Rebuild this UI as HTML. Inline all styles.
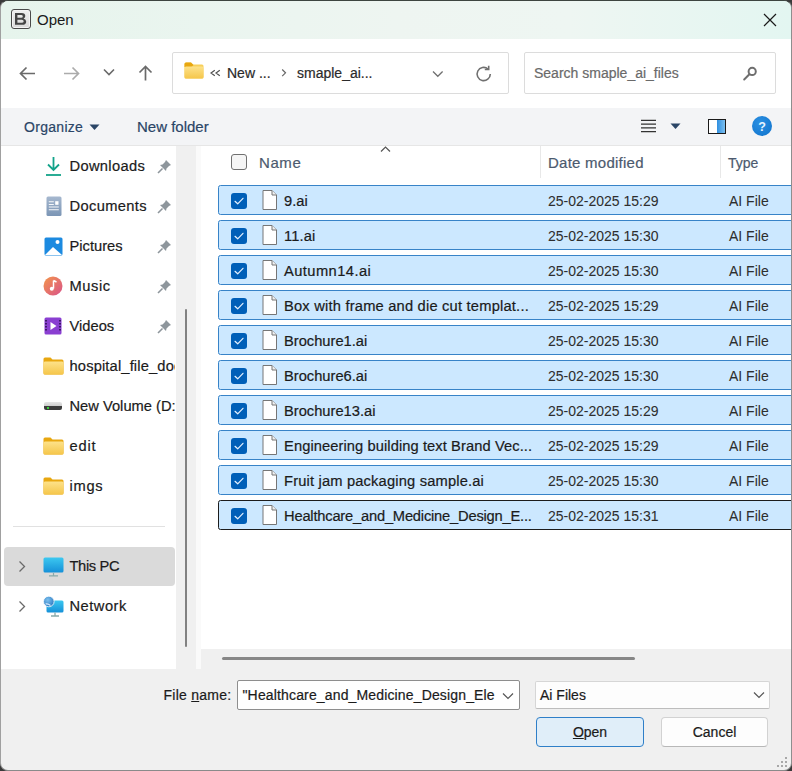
<!DOCTYPE html>
<html><head><meta charset="utf-8">
<style>
*{box-sizing:border-box;margin:0;padding:0}
html,body{width:792px;height:771px;overflow:hidden;background:#3a3a3a}
body{position:relative;font-family:"Liberation Sans",sans-serif;font-size:14px;color:#1b1b1b;-webkit-text-stroke:0.2px currentColor}
.a{position:absolute}
.t{position:absolute;white-space:nowrap;line-height:20px;height:20px}
#win{position:absolute;left:0;top:0;width:792px;height:771px;border-radius:8px;overflow:hidden;background:#f0f0f0;border:1px solid #a0a0a0;border-top-color:#3d4540;border-right-color:#8e8e8e;border-bottom-color:#8a8a8a}
#title{left:0;top:0;width:790px;height:38px;background:linear-gradient(90deg,#e6f4ec 0%,#eaf5ef 25%,#eef5f1 50%,#eef6f2 72%,#e3f6f1 100%)}
#cmd{left:0;top:38px;width:790px;height:69px;background:#fff}
#tool{left:0;top:107px;width:790px;height:38px;background:#f3f4f6;border-bottom:1px solid #e6e6e6}
#nav{left:0;top:145px;width:175px;height:523px;background:#fff}
#vtrack{left:175px;top:145px;width:20px;height:523px;background:#f0f0f0}
#vsep{left:195px;top:145px;width:5px;height:523px;background:#fafafa}
#content{left:200px;top:145px;width:590px;height:503px;background:#fff}
#htrack{left:200px;top:648px;width:590px;height:20px;background:#f0f0f0}
.row{position:absolute;left:218px;width:600px;height:30px;background:#cce8ff;border:1.5px solid #3783c8;border-radius:2.5px}
.cb{position:absolute;left:11.5px;top:6.5px;width:16px;height:16px;background:#005fb8;border-radius:3px}
.nm{position:absolute;left:65px;top:5px;font-size:14.7px;line-height:20px;white-space:nowrap}
.dt{position:absolute;left:329px;top:4.5px;line-height:20px;white-space:nowrap;color:#2e2e2e;-webkit-text-stroke:0.05px currentColor}
.ty{position:absolute;left:510px;top:4.5px;line-height:20px;white-space:nowrap;color:#2e2e2e;-webkit-text-stroke:0.05px currentColor}
.fi{position:absolute;left:42.5px;top:3px}
.ni{position:absolute;left:69.5px;line-height:20px;white-space:nowrap;font-size:14.7px}
.pin{position:absolute;left:157px}
.box{position:absolute;background:#fff;border:1px solid #dcdcdc;border-radius:2px}
</style></head><body>
<div id="win">
<div id="title" class="a"></div>
<div id="cmd" class="a"></div>
<div id="tool" class="a"></div>
<div id="nav" class="a"></div>
<div id="vtrack" class="a"></div>
<div id="vsep" class="a"></div>
<div id="content" class="a"></div>
<div id="htrack" class="a"></div>
</div>
<!-- title bar -->
<div class="a" style="left:11px;top:9px;width:20px;height:20px;border:1.5px solid #4a4a4a;border-radius:3px;background:linear-gradient(#eeeeee,#dadada);box-shadow:inset 0 0 0 1px #f4f4f4"></div>
<svg class="a" style="left:14px;top:12px" width="14" height="14" viewBox="0 0 14 14"><path fill-rule="evenodd" fill="#454545" d="M1 1 H7.6 Q11.3 1 11.3 4 Q11.3 5.8 9.6 6.5 Q12.2 7.2 12.2 9.7 Q12.2 12.8 8.2 12.8 H1 Z M3.4 3.1 H7.2 Q8.8 3.1 8.8 4.4 Q8.8 5.7 7.2 5.7 H3.4 Z M3.4 7.7 H7.7 Q9.7 7.7 9.7 9.2 Q9.7 10.7 7.7 10.7 H3.4 Z"/></svg>
<div class="t" style="left:37px;top:9.5px;font-size:15px;color:#1a1a1a;-webkit-text-stroke:0">Open</div>
<svg class="a" style="left:763px;top:13px" width="14" height="14" viewBox="0 0 14 14"><path d="M1 1 L13 13 M13 1 L1 13" stroke="#1a1a1a" stroke-width="1.2"/></svg>

<!-- nav buttons -->
<svg class="a" style="left:19px;top:65.5px" width="17" height="15" viewBox="0 0 17 15"><path d="M16 7.5 H2 M7.5 1.5 L1.5 7.5 L7.5 13.5" fill="none" stroke="#6a6a6a" stroke-width="1.7"/></svg>
<svg class="a" style="left:63px;top:65.5px" width="17" height="15" viewBox="0 0 17 15"><path d="M1 7.5 H15 M9.5 1.5 L15.5 7.5 L9.5 13.5" fill="none" stroke="#ababab" stroke-width="1.7"/></svg>
<svg class="a" style="left:103px;top:68px" width="12" height="8" viewBox="0 0 12 8"><path d="M1 1.5 L6 6.5 L11 1.5" fill="none" stroke="#6a6a6a" stroke-width="1.6"/></svg>
<svg class="a" style="left:137px;top:65px" width="17" height="16" viewBox="0 0 17 16"><path d="M8.5 15.5 V1.5 M2.5 7.5 L8.5 1.5 L14.5 7.5" fill="none" stroke="#6a6a6a" stroke-width="1.7"/></svg>

<!-- address box -->
<div class="box" style="left:172px;top:52px;width:337px;height:42px"></div>
<svg class="a" style="left:184px;top:62px" width="20" height="17" viewBox="0 0 20 17"><path d="M0.5 2 Q0.5 0.5 2 0.5 H7 L9 2.5 H18 Q19.5 2.5 19.5 4 V15 Q19.5 16.5 18 16.5 H2 Q0.5 16.5 0.5 15 Z" fill="#f7cf5a"/><path d="M0.5 2 Q0.5 0.5 2 0.5 H7 L9.5 3 L7.5 5 H0.5 Z" fill="#e8a710"/><rect x="0.5" y="4.5" width="19" height="12" rx="1.5" fill="url(#fg)"/><defs><linearGradient id="fg" x1="0" y1="0" x2="0" y2="1"><stop offset="0" stop-color="#fde28a"/><stop offset="1" stop-color="#f5c64a"/></linearGradient></defs></svg>
<svg class="a" style="left:210px;top:69px" width="11" height="8" viewBox="0 0 11 8"><path d="M4.8 1.2 L1 4 L4.8 6.8 M9.8 1.2 L6 4 L9.8 6.8" fill="none" stroke="#505050" stroke-width="1.2"/></svg>
<div class="t" style="left:227px;top:63px;color:#2b2b2b">New ...</div>
<svg class="a" style="left:280px;top:67px" width="8" height="11" viewBox="0 0 8 11"><path d="M2.2 2.5 L5.5 5.8 L2.2 9.1" fill="none" stroke="#666" stroke-width="1.2"/></svg>
<div class="t" style="left:297px;top:63px;color:#2b2b2b">smaple_ai...</div>
<svg class="a" style="left:431.5px;top:70px" width="12" height="8" viewBox="0 0 12 8"><path d="M1 1.5 L5.8 6.3 L10.6 1.5" fill="none" stroke="#707070" stroke-width="1.3"/></svg>
<svg class="a" style="left:475px;top:65px" width="18" height="18" viewBox="0 0 18 18"><path d="M15.3 9 A6.6 6.6 0 1 1 13 4" fill="none" stroke="#707070" stroke-width="1.6"/><path d="M9.8 4.5 H13.7 V0.8" fill="none" stroke="#707070" stroke-width="1.6"/></svg>

<!-- search box -->
<div class="box" style="left:524px;top:52px;width:252px;height:42px"></div>
<div class="t" style="left:534px;top:62.5px;color:#6a6a6a">Search smaple_ai_files</div>
<svg class="a" style="left:742px;top:66px" width="16" height="16" viewBox="0 0 16 16"><circle cx="10.2" cy="5.4" r="3.6" fill="none" stroke="#6e6e6e" stroke-width="2"/><path d="M7.4 8.3 L2.2 13.5" stroke="#6e6e6e" stroke-width="2" stroke-linecap="round"/></svg>

<!-- toolbar -->
<div class="t" style="left:24px;top:117px;color:#2a4566;letter-spacing:0.3px">Organize</div>
<svg class="a" style="left:89px;top:124px" width="11" height="7" viewBox="0 0 11 7"><path d="M0.5 0.5 H10.5 L5.5 6 Z" fill="#2a4566"/></svg>
<div class="t" style="left:137px;top:117px;color:#2a4566;font-size:15px">New folder</div>
<svg class="a" style="left:640px;top:118px" width="17" height="16" viewBox="0 0 17 16"><path d="M1 2.3 H16 M1 6.1 H16 M1 9.9 H16 M1 13.7 H16" stroke="#333" stroke-width="1.3"/></svg>
<svg class="a" style="left:670px;top:123px" width="11" height="7" viewBox="0 0 11 7"><path d="M0.5 0.5 H10.5 L5.5 6 Z" fill="#2a4566"/></svg>
<div class="a" style="left:708px;top:119px;width:18px;height:15px;border:1.6px solid #1a1a1a;background:linear-gradient(90deg,#fff 0,#fff 50%,#2f8fe0 50%,#7cc0f0 100%)"></div>
<div class="a" style="left:752px;top:116px;width:20px;height:20px;border-radius:50%;background:radial-gradient(circle at 40% 35%,#2b90e2,#0f72cc)"></div>
<div class="t" style="left:752px;top:117px;width:20px;text-align:center;font-weight:bold;font-size:12.5px;color:#e8f4ff;-webkit-text-stroke:0">?</div>

<!-- nav pane items -->
<svg class="a" style="left:45px;top:156px" width="17" height="21" viewBox="0 0 17 21"><path d="M8.5 1 V14 M3 8.5 L8.5 14 L14 8.5" fill="none" stroke="#13a38a" stroke-width="1.8"/><path d="M1 19 H16" stroke="#13a38a" stroke-width="1.8"/></svg>
<div class="ni" style="top:156px;letter-spacing:0.32px">Downloads</div>
<svg class="a" style="left:45.5px;top:196px" width="16" height="21" viewBox="0 0 16 21"><rect x="0.5" y="0.5" width="15" height="19.5" rx="1.5" fill="url(#dg)"/><path d="M2.8 5.7 H7.8 M2.8 8.5 H7.8 M2.8 11 H12.8 M2.8 13.7 H12.8" stroke="#fff" stroke-width="1.1" opacity=".92"/><rect x="9.2" y="5.2" width="3.3" height="3.6" fill="#fff"/><defs><linearGradient id="dg" x1="0" y1="0" x2="0" y2="1"><stop offset="0" stop-color="#a6b8cf"/><stop offset="1" stop-color="#7b95b5"/></linearGradient></defs></svg>
<div class="ni" style="top:196px;letter-spacing:0.35px">Documents</div>
<svg class="a" style="left:44px;top:237px" width="19" height="19" viewBox="0 0 19 19"><rect x="0.5" y="0.5" width="18" height="18" rx="1.5" fill="#1c8ae0"/><path d="M1 18 L9 10 L18 18 Z" fill="#fff"/><circle cx="13.5" cy="5" r="2" fill="#fff"/></svg>
<div class="ni" style="top:236px">Pictures</div>
<svg class="a" style="left:43px;top:276px" width="20" height="20" viewBox="0 0 20 20"><defs><linearGradient id="mg" x1="0" y1="0" x2="1" y2="1"><stop offset="0" stop-color="#f3964a"/><stop offset="1" stop-color="#d9528a"/></linearGradient></defs><circle cx="10" cy="10" r="9.5" fill="url(#mg)"/><path d="M10.5 4.5 V12.5 M10.5 4.5 L13.5 6" stroke="#fff" stroke-width="1.5" fill="none"/><circle cx="8.8" cy="12.8" r="2" fill="#fff"/></svg>
<div class="ni" style="top:276px;letter-spacing:0.55px">Music</div>
<svg class="a" style="left:44px;top:317px" width="18" height="18" viewBox="0 0 18 18"><rect x="0.5" y="0.5" width="17" height="17" rx="1.5" fill="#8a3fd1"/><path d="M6.5 5 L12.5 9 L6.5 13 Z" fill="#fff"/><path d="M2 3 V15 M16 3 V15" stroke="#2b1050" stroke-width="1.6" stroke-dasharray="1.5 1.5"/></svg>
<div class="ni" style="top:316px">Videos</div>
<svg class="a" style="left:43px;top:357px" width="21" height="18" viewBox="0 0 21 18"><path d="M0.5 2 Q0.5 0.5 2 0.5 H7.5 L9.5 2.5 H19 Q20.5 2.5 20.5 4 V16 Q20.5 17.5 19 17.5 H2 Q0.5 17.5 0.5 16 Z" fill="#e8a710"/><rect x="0.5" y="4.5" width="20" height="13" rx="1.5" fill="url(#fg)"/></svg>
<div class="ni" style="top:356px;width:105px;overflow:hidden;letter-spacing:0.15px">hospital_file_doc</div>
<div class="a" style="left:44px;top:402px;width:18px;height:8px;border-radius:2px;background:linear-gradient(#e6e6e6 0,#d0d0d0 45%,#3c3c3c 45%,#3c3c3c 100%)"></div>
<div class="a" style="left:47px;top:407px;width:2px;height:2px;background:#3bd23b"></div>
<div class="ni" style="top:396px;width:105px;overflow:hidden">New Volume (D:)</div>
<svg class="a" style="left:43px;top:437px" width="21" height="18" viewBox="0 0 21 18"><path d="M0.5 2 Q0.5 0.5 2 0.5 H7.5 L9.5 2.5 H19 Q20.5 2.5 20.5 4 V16 Q20.5 17.5 19 17.5 H2 Q0.5 17.5 0.5 16 Z" fill="#e8a710"/><rect x="0.5" y="4.5" width="20" height="13" rx="1.5" fill="url(#fg)"/></svg>
<div class="ni" style="top:436px;letter-spacing:0.8px">edit</div>
<svg class="a" style="left:43px;top:477px" width="21" height="18" viewBox="0 0 21 18"><path d="M0.5 2 Q0.5 0.5 2 0.5 H7.5 L9.5 2.5 H19 Q20.5 2.5 20.5 4 V16 Q20.5 17.5 19 17.5 H2 Q0.5 17.5 0.5 16 Z" fill="#e8a710"/><rect x="0.5" y="4.5" width="20" height="13" rx="1.5" fill="url(#fg)"/></svg>
<div class="ni" style="top:476px;letter-spacing:0.73px">imgs</div>
<!-- pins -->
<svg class="pin" style="top:159px" width="15" height="15" viewBox="0 0 15 15"><path d="M9 1 L14 6 L12 7 L9.5 9.5 L9 12 L3 6 L5.5 5.5 L8 3 Z" fill="#8e969c"/><path d="M5.5 9.5 L1 14" stroke="#8e969c" stroke-width="1.6"/></svg>
<svg class="pin" style="top:199px" width="15" height="15" viewBox="0 0 15 15"><path d="M9 1 L14 6 L12 7 L9.5 9.5 L9 12 L3 6 L5.5 5.5 L8 3 Z" fill="#8e969c"/><path d="M5.5 9.5 L1 14" stroke="#8e969c" stroke-width="1.6"/></svg>
<svg class="pin" style="top:239px" width="15" height="15" viewBox="0 0 15 15"><path d="M9 1 L14 6 L12 7 L9.5 9.5 L9 12 L3 6 L5.5 5.5 L8 3 Z" fill="#8e969c"/><path d="M5.5 9.5 L1 14" stroke="#8e969c" stroke-width="1.6"/></svg>
<svg class="pin" style="top:279px" width="15" height="15" viewBox="0 0 15 15"><path d="M9 1 L14 6 L12 7 L9.5 9.5 L9 12 L3 6 L5.5 5.5 L8 3 Z" fill="#8e969c"/><path d="M5.5 9.5 L1 14" stroke="#8e969c" stroke-width="1.6"/></svg>
<svg class="pin" style="top:319px" width="15" height="15" viewBox="0 0 15 15"><path d="M9 1 L14 6 L12 7 L9.5 9.5 L9 12 L3 6 L5.5 5.5 L8 3 Z" fill="#8e969c"/><path d="M5.5 9.5 L1 14" stroke="#8e969c" stroke-width="1.6"/></svg>
<!-- separator -->
<div class="a" style="left:13px;top:526px;width:152px;height:1px;background:#e1e1e1"></div>
<!-- This PC -->
<div class="a" style="left:4px;top:547px;width:171px;height:39px;background:#dadada;border-radius:4px"></div>
<svg class="a" style="left:18px;top:560px" width="8" height="13" viewBox="0 0 8 13"><path d="M1.5 1.5 L6.5 6.5 L1.5 11.5" fill="none" stroke="#6a6a6a" stroke-width="1.3"/></svg>
<svg class="a" style="left:43px;top:557px" width="21" height="20" viewBox="0 0 21 20"><defs><linearGradient id="pg" x1="0" y1="0" x2="0" y2="1"><stop offset="0" stop-color="#3cc8f0"/><stop offset="1" stop-color="#1590d8"/></linearGradient></defs><rect x="0.5" y="0.5" width="20" height="15" rx="1.5" fill="url(#pg)"/><path d="M10.5 16 V18.3 M6 18.8 H15" stroke="#8aa" stroke-width="1.2"/></svg>
<div class="ni" style="top:556px;letter-spacing:-0.35px">This PC</div>
<svg class="a" style="left:18px;top:600px" width="8" height="13" viewBox="0 0 8 13"><path d="M1.5 1.5 L6.5 6.5 L1.5 11.5" fill="none" stroke="#6a6a6a" stroke-width="1.3"/></svg>
<svg class="a" style="left:43px;top:596px" width="21" height="21" viewBox="0 0 21 21"><rect x="3.5" y="4.5" width="17" height="12" rx="1.5" fill="url(#pg)"/><path d="M12 16.5 V19.5 M8 20 H16" stroke="#8aa" stroke-width="1.3"/><defs><radialGradient id="gl" cx="0.4" cy="0.35" r="0.7"><stop offset="0" stop-color="#7cc0ee"/><stop offset="1" stop-color="#2a78c0"/></radialGradient></defs><circle cx="5.8" cy="5.5" r="5.3" fill="url(#gl)" stroke="#fff" stroke-width="0.8"/><path d="M2.5 8 Q5 7.5 7.5 9.5" stroke="#dff0ff" stroke-width="1.1" fill="none"/></svg>
<div class="ni" style="top:596px;letter-spacing:0.48px">Network</div>
<!-- vertical thumb -->
<div class="a" style="left:184.8px;top:309px;width:2.6px;height:338px;border-radius:1.3px;background:#828282"></div>

<!-- header -->
<div class="a" style="left:231px;top:154px;width:16px;height:16px;border:1px solid #707070;border-radius:3px;background:#f5f5f5"></div>
<div class="t" style="left:259px;top:153px;color:#4c5a6e;font-size:15px;letter-spacing:0.6px">Name</div>
<svg class="a" style="left:380px;top:145px" width="11" height="8" viewBox="0 0 11 8"><path d="M1 6.5 L5.5 2 L10 6.5" fill="none" stroke="#555" stroke-width="1.2"/></svg>
<div class="a" style="left:540px;top:146px;width:1px;height:32px;background:#e8e8e8"></div>
<div class="a" style="left:720px;top:146px;width:1px;height:32px;background:#e8e8e8"></div>
<div class="t" style="left:548px;top:153px;color:#4c5a6e;font-size:15px;letter-spacing:0.25px">Date modified</div>
<div class="t" style="left:728px;top:153px;color:#4c5a6e">Type</div>

<!-- rows -->
<div class="a" style="left:0;top:0;width:791px;height:649px;overflow:hidden">
<div class="row" style="top:185px"><div class="cb"><svg class="a" style="left:0;top:0" width="16" height="16" viewBox="0 0 16 16"><path d="M4 8.3 L6.7 10.8 L12 5.3" fill="none" stroke="#e6f2ff" stroke-width="1.2" stroke-linecap="round" stroke-linejoin="round"/></svg></div><svg class="fi" width="16" height="22" viewBox="0 0 16 22"><path d="M1 1.5 H10 L14.5 6 V20.5 H1 Z" fill="#fff" stroke="#767676" stroke-width="1"/><path d="M10 1.5 V6 H14.5" fill="#f0f0f0" stroke="#767676" stroke-width="1"/></svg><div class="nm">9.ai</div><div class="dt">25-02-2025 15:29</div><div class="ty">AI File</div></div>
<div class="row" style="top:220px"><div class="cb"><svg class="a" style="left:0;top:0" width="16" height="16" viewBox="0 0 16 16"><path d="M4 8.3 L6.7 10.8 L12 5.3" fill="none" stroke="#e6f2ff" stroke-width="1.2" stroke-linecap="round" stroke-linejoin="round"/></svg></div><svg class="fi" width="16" height="22" viewBox="0 0 16 22"><path d="M1 1.5 H10 L14.5 6 V20.5 H1 Z" fill="#fff" stroke="#767676" stroke-width="1"/><path d="M10 1.5 V6 H14.5" fill="#f0f0f0" stroke="#767676" stroke-width="1"/></svg><div class="nm" style="letter-spacing:0.1px">11.ai</div><div class="dt">25-02-2025 15:30</div><div class="ty">AI File</div></div>
<div class="row" style="top:255px"><div class="cb"><svg class="a" style="left:0;top:0" width="16" height="16" viewBox="0 0 16 16"><path d="M4 8.3 L6.7 10.8 L12 5.3" fill="none" stroke="#e6f2ff" stroke-width="1.2" stroke-linecap="round" stroke-linejoin="round"/></svg></div><svg class="fi" width="16" height="22" viewBox="0 0 16 22"><path d="M1 1.5 H10 L14.5 6 V20.5 H1 Z" fill="#fff" stroke="#767676" stroke-width="1"/><path d="M10 1.5 V6 H14.5" fill="#f0f0f0" stroke="#767676" stroke-width="1"/></svg><div class="nm" style="letter-spacing:0.43px">Autumn14.ai</div><div class="dt">25-02-2025 15:30</div><div class="ty">AI File</div></div>
<div class="row" style="top:290px"><div class="cb"><svg class="a" style="left:0;top:0" width="16" height="16" viewBox="0 0 16 16"><path d="M4 8.3 L6.7 10.8 L12 5.3" fill="none" stroke="#e6f2ff" stroke-width="1.2" stroke-linecap="round" stroke-linejoin="round"/></svg></div><svg class="fi" width="16" height="22" viewBox="0 0 16 22"><path d="M1 1.5 H10 L14.5 6 V20.5 H1 Z" fill="#fff" stroke="#767676" stroke-width="1"/><path d="M10 1.5 V6 H14.5" fill="#f0f0f0" stroke="#767676" stroke-width="1"/></svg><div class="nm" style="letter-spacing:0.2px">Box with frame and die cut templat...</div><div class="dt">25-02-2025 15:29</div><div class="ty">AI File</div></div>
<div class="row" style="top:325px"><div class="cb"><svg class="a" style="left:0;top:0" width="16" height="16" viewBox="0 0 16 16"><path d="M4 8.3 L6.7 10.8 L12 5.3" fill="none" stroke="#e6f2ff" stroke-width="1.2" stroke-linecap="round" stroke-linejoin="round"/></svg></div><svg class="fi" width="16" height="22" viewBox="0 0 16 22"><path d="M1 1.5 H10 L14.5 6 V20.5 H1 Z" fill="#fff" stroke="#767676" stroke-width="1"/><path d="M10 1.5 V6 H14.5" fill="#f0f0f0" stroke="#767676" stroke-width="1"/></svg><div class="nm">Brochure1.ai</div><div class="dt">25-02-2025 15:30</div><div class="ty">AI File</div></div>
<div class="row" style="top:360px"><div class="cb"><svg class="a" style="left:0;top:0" width="16" height="16" viewBox="0 0 16 16"><path d="M4 8.3 L6.7 10.8 L12 5.3" fill="none" stroke="#e6f2ff" stroke-width="1.2" stroke-linecap="round" stroke-linejoin="round"/></svg></div><svg class="fi" width="16" height="22" viewBox="0 0 16 22"><path d="M1 1.5 H10 L14.5 6 V20.5 H1 Z" fill="#fff" stroke="#767676" stroke-width="1"/><path d="M10 1.5 V6 H14.5" fill="#f0f0f0" stroke="#767676" stroke-width="1"/></svg><div class="nm">Brochure6.ai</div><div class="dt">25-02-2025 15:30</div><div class="ty">AI File</div></div>
<div class="row" style="top:395px"><div class="cb"><svg class="a" style="left:0;top:0" width="16" height="16" viewBox="0 0 16 16"><path d="M4 8.3 L6.7 10.8 L12 5.3" fill="none" stroke="#e6f2ff" stroke-width="1.2" stroke-linecap="round" stroke-linejoin="round"/></svg></div><svg class="fi" width="16" height="22" viewBox="0 0 16 22"><path d="M1 1.5 H10 L14.5 6 V20.5 H1 Z" fill="#fff" stroke="#767676" stroke-width="1"/><path d="M10 1.5 V6 H14.5" fill="#f0f0f0" stroke="#767676" stroke-width="1"/></svg><div class="nm">Brochure13.ai</div><div class="dt">25-02-2025 15:29</div><div class="ty">AI File</div></div>
<div class="row" style="top:430px"><div class="cb"><svg class="a" style="left:0;top:0" width="16" height="16" viewBox="0 0 16 16"><path d="M4 8.3 L6.7 10.8 L12 5.3" fill="none" stroke="#e6f2ff" stroke-width="1.2" stroke-linecap="round" stroke-linejoin="round"/></svg></div><svg class="fi" width="16" height="22" viewBox="0 0 16 22"><path d="M1 1.5 H10 L14.5 6 V20.5 H1 Z" fill="#fff" stroke="#767676" stroke-width="1"/><path d="M10 1.5 V6 H14.5" fill="#f0f0f0" stroke="#767676" stroke-width="1"/></svg><div class="nm" style="letter-spacing:0.084px">Engineering building text Brand Vec...</div><div class="dt">25-02-2025 15:29</div><div class="ty">AI File</div></div>
<div class="row" style="top:465px"><div class="cb"><svg class="a" style="left:0;top:0" width="16" height="16" viewBox="0 0 16 16"><path d="M4 8.3 L6.7 10.8 L12 5.3" fill="none" stroke="#e6f2ff" stroke-width="1.2" stroke-linecap="round" stroke-linejoin="round"/></svg></div><svg class="fi" width="16" height="22" viewBox="0 0 16 22"><path d="M1 1.5 H10 L14.5 6 V20.5 H1 Z" fill="#fff" stroke="#767676" stroke-width="1"/><path d="M10 1.5 V6 H14.5" fill="#f0f0f0" stroke="#767676" stroke-width="1"/></svg><div class="nm" style="letter-spacing:0.17px">Fruit jam packaging sample.ai</div><div class="dt">25-02-2025 15:30</div><div class="ty">AI File</div></div>
<div class="row" style="top:500px;border-color:#1c1c1c"><div class="cb"><svg class="a" style="left:0;top:0" width="16" height="16" viewBox="0 0 16 16"><path d="M4 8.3 L6.7 10.8 L12 5.3" fill="none" stroke="#e6f2ff" stroke-width="1.2" stroke-linecap="round" stroke-linejoin="round"/></svg></div><svg class="fi" width="16" height="22" viewBox="0 0 16 22"><path d="M1 1.5 H10 L14.5 6 V20.5 H1 Z" fill="#fff" stroke="#767676" stroke-width="1"/><path d="M10 1.5 V6 H14.5" fill="#f0f0f0" stroke="#767676" stroke-width="1"/></svg><div class="nm" style="letter-spacing:-0.2px">Healthcare_and_Medicine_Design_E...</div><div class="dt">25-02-2025 15:31</div><div class="ty">AI File</div></div>
</div>
<!-- horizontal thumb -->
<div class="a" style="left:222px;top:657px;width:413px;height:3px;border-radius:1.5px;background:#868686"></div>

<!-- bottom -->
<div class="t" style="left:163.5px;top:685px;color:#1b1b1b;letter-spacing:0.25px">File <u>n</u>ame:</div>
<div class="a" style="left:237px;top:680px;width:283px;height:30px;background:#fff;border:1px solid #8e8e8e;border-radius:2px"></div>
<div class="t" style="left:242.5px;top:685px;letter-spacing:0.15px;color:#1b1b1b">"Healthcare_and_Medicine_Design_Ele</div>
<svg class="a" style="left:502px;top:692px" width="12" height="8" viewBox="0 0 12 8"><path d="M1 1.5 L6 6.5 L11 1.5" fill="none" stroke="#555" stroke-width="1.2"/></svg>
<div class="a" style="left:535px;top:681px;width:235px;height:28px;background:#fdfdfd;border:1px solid #d6d6d6;border-bottom-color:#bdbdbd;border-radius:2px"></div>
<div class="t" style="left:540px;top:685px;color:#1b1b1b">Ai Files</div>
<svg class="a" style="left:752.5px;top:691px" width="12" height="8" viewBox="0 0 12 8"><path d="M1 1.5 L6 6.5 L11 1.5" fill="none" stroke="#555" stroke-width="1.2"/></svg>
<div class="a" style="left:536px;top:717px;width:108px;height:30px;background:#e0eef9;border:1.5px solid #2f7fc8;border-radius:4px"></div>
<div class="t" style="left:536px;top:722px;width:108px;text-align:center;color:#1b1b1b"><u>O</u>pen</div>
<div class="a" style="left:661px;top:717px;width:107px;height:30px;background:#fdfdfd;border:1px solid #d2d2d2;border-bottom-color:#b8b8b8;border-radius:4px"></div>
<div class="t" style="left:661px;top:722px;width:107px;text-align:center;color:#1b1b1b">Cancel</div>
<!-- gripper -->
<div class="a" style="left:785px;top:757px;width:2px;height:2px;background:#a8a8a8"></div>
<div class="a" style="left:781px;top:761px;width:2px;height:2px;background:#a8a8a8"></div>
<div class="a" style="left:785px;top:761px;width:2px;height:2px;background:#a8a8a8"></div>
<div class="a" style="left:777px;top:765px;width:2px;height:2px;background:#a8a8a8"></div>
<div class="a" style="left:781px;top:765px;width:2px;height:2px;background:#a8a8a8"></div>
<div class="a" style="left:785px;top:765px;width:2px;height:2px;background:#a8a8a8"></div>

</body></html>
